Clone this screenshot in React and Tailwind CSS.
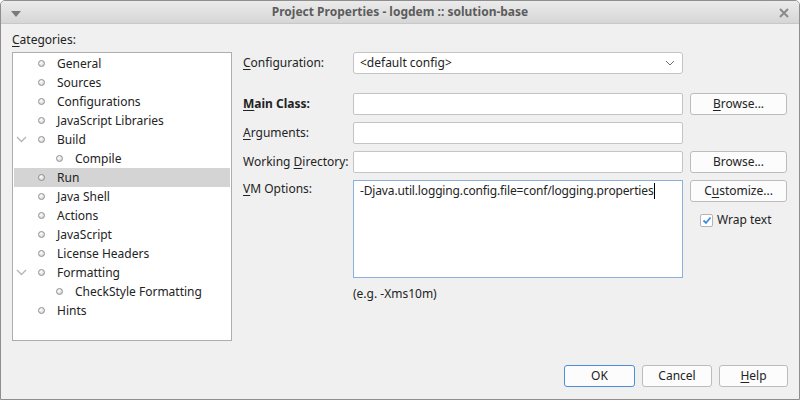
import React from "react";

const font = { fontFamily: '"Noto Sans", "Open Sans", sans-serif' };

function U({ children }) {
  return <span className="underline underline-offset-2">{children}</span>;
}

function Bullet() {
  return (
    <span className="inline-block w-[7px] h-[7px] rounded-full border border-[#8f8f8f] bg-[radial-gradient(circle_at_40%_35%,#ffffff,#c8c8c8)]" />
  );
}

function Chevron() {
  return (
    <svg width="11" height="7" viewBox="0 0 11 7" className="block">
      <path d="M1 1 L5.5 5.5 L10 1" fill="none" stroke="#b4b4b4" strokeWidth="1.3" />
    </svg>
  );
}

const items = [
  { t: "General" },
  { t: "Sources" },
  { t: "Configurations" },
  { t: "JavaScript Libraries" },
  { t: "Build", exp: true },
  { t: "Compile", sub: true },
  { t: "Run", sel: true },
  { t: "Java Shell" },
  { t: "Actions" },
  { t: "JavaScript" },
  { t: "License Headers" },
  { t: "Formatting", exp: true },
  { t: "CheckStyle Formatting", sub: true },
  { t: "Hints" },
];

function Btn({ children, className = "" }) {
  return (
    <div
      className={
        "h-[22px] flex items-center justify-center rounded-[3px] border border-[#bcbcbc] bg-[#fcfcfc] text-[12px] text-[#232323] " +
        className
      }
    >
      <span>{children}</span>
    </div>
  );
}

function Input({ className = "" }) {
  return <div className={"h-[22px] rounded-[2px] border border-[#c4c4c4] bg-white " + className} />;
}

function Label({ children, className = "" }) {
  return (
    <div className={"h-[22px] flex items-center whitespace-nowrap text-[12px] text-[#232323] " + className}>
      <span>{children}</span>
    </div>
  );
}

export default function App() {
  return (
    <div style={font} className="w-[800px] h-[400px] bg-[#f0f0f0] border border-[#8e8e8e] rounded-t-[5px] flex flex-col overflow-hidden text-[#232323]">
      {/* title bar */}
      <div className="h-[23px] shrink-0 relative flex items-center justify-center bg-[linear-gradient(#ebebeb,#d6d6d6)] border-b border-[#c8c8c8]">
        <svg width="10" height="6" viewBox="0 0 10 6" className="absolute left-[10px] top-[10px]">
          <path d="M0 0 H10 L5 6 Z" fill="#7a7a7a" />
        </svg>
        <span className="text-[12px] font-bold text-[#5c5c5c]">Project Properties - logdem :: solution-base</span>
        <svg width="10" height="10" viewBox="0 0 10 10" className="absolute right-[10px] top-[7px]">
          <path d="M1 1 L9 9 M9 1 L1 9" stroke="#8a8a8a" strokeWidth="2" />
        </svg>
      </div>

      <div className="flex flex-1 px-[11px] pt-[8px]">
        {/* left */}
        <div className="w-[220px] shrink-0 flex flex-col">
          <div className="h-[16px] leading-[16px] text-[12px]">
            <U>C</U>ategories:
          </div>
          <div className="mt-[4px] h-[289px] bg-white border border-[#adadad] p-[1px] text-[12px]">
            {items.map((it) => (
              <div
                key={it.t}
                className={"h-[19px] flex items-center " + (it.sel ? "bg-[#d4d4d4]" : "")}
              >
                <div className="w-[14px] pl-[2px] flex items-center">{it.exp && <Chevron />}</div>
                <div className={"flex items-center " + (it.sub ? "pl-[28px]" : "pl-[10px]")}>
                  <Bullet />
                </div>
                <span className="ml-[12px] leading-[19px]">{it.t}</span>
              </div>
            ))}
          </div>
        </div>

        {/* right */}
        <div className="ml-[11px] pt-[20px] grid grid-cols-[103px_330px_97px] gap-x-[7px] content-start">
          <Label>
            <U>C</U>onfiguration:
          </Label>
          <div className="h-[22px] rounded-[3px] border border-[#c4c4c4] bg-white flex items-center pl-[6px] pr-[6px] text-[12px]">
            <span className="flex-1">&lt;default config&gt;</span>
            <svg width="10" height="6" viewBox="0 0 10 6" className="mr-[1px]">
              <path d="M1 1 L5 5 L9 1" fill="none" stroke="#707070" strokeWidth="1" />
            </svg>
          </div>
          <div />

          <Label className="mt-[19px] font-bold">
            <U>M</U>ain Class:
          </Label>
          <Input className="mt-[19px]" />
          <Btn className="mt-[19px]">
            <U>B</U>rowse...
          </Btn>

          <Label className="mt-[7px]">
            <U>A</U>rguments:
          </Label>
          <Input className="mt-[7px]" />
          <div />

          <Label className="mt-[7px]">
            Working <U>D</U>irectory:
          </Label>
          <Input className="mt-[7px]" />
          <Btn className="mt-[7px]">Browse...</Btn>

          <div className="mt-[7px] text-[12px] leading-[18px] whitespace-nowrap">
            <U>V</U>M Options:
          </div>
          <div className="mt-[7px] h-[98px] border border-[#8cb0dc] bg-white pl-[6px] pt-[1px] text-[12px] leading-[18px] whitespace-nowrap tracking-[-0.15px]">
            -Djava.util.logging.config.file=conf/logging.properties
            <span className="inline-block w-[1px] h-[16px] bg-black align-middle -mt-[2px]" />
          </div>
          <div className="mt-[7px] flex flex-col">
            <Btn>
              C<U>u</U>stomize...
            </Btn>
            <div className="mt-[9px] flex items-center pl-[10px] text-[12px]">
              <div className="w-[13px] h-[13px] rounded-[2px] border border-[#b4b4b4] bg-white flex items-center justify-center">
                <svg width="10" height="9" viewBox="0 0 10 9">
                  <path d="M1.5 4.5 L4 7 L8.5 1.5" fill="none" stroke="#3d8ee0" strokeWidth="1.8" />
                </svg>
              </div>
              <span className="ml-[4px]">Wrap text</span>
            </div>
          </div>

          <div />
          <div className="mt-[8px] text-[12px] h-[16px] leading-[16px]">(e.g. -Xms10m)</div>
          <div />
        </div>
      </div>

      {/* bottom buttons */}
      <div className="h-[35px] shrink-0 flex justify-end gap-[7px] pr-[11px] pt-[1px]">
        <Btn className="w-[71px] !border-[#4a90d9]">OK</Btn>
        <Btn className="w-[70px]">Cancel</Btn>
        <Btn className="w-[69px]">
          <U>H</U>elp
        </Btn>
      </div>
    </div>
  );
}
